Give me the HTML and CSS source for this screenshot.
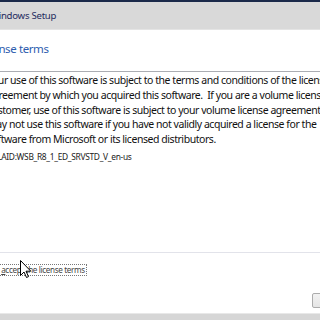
FILE: index.html
```html
<!DOCTYPE html>
<html>
<head>
<meta charset="utf-8">
<link rel="stylesheet" href="styles.css">
</head>
<body>
<div class="screen">
  <div class="topline"></div>
  <header class="titlebar"><span class="title">Windows Setup</span></header>
  <main class="content">
    <h1 class="heading">License terms</h1>
    <div class="eula">
      <p class="eula-text">Your use of this software is subject to the terms and conditions of the license<br>agreement by which you acquired this software.&nbsp; If you are a volume license<br>customer, use of this software is subject to your volume license agreement.&nbsp; You<br>may not use this software if you have not validly acquired a license for the<br>software from Microsoft or its licensed distributors.</p>
      <p class="eula-id">EULAID:WSB_R8_1_ED_SRVSTD_V_en-us</p>
    </div>
    <div class="accept">
      <label class="accept-label"><span class="box"></span><span class="focus">I <u>a</u>ccept the license terms</span></label>
    </div>
    <div class="buttons"><button class="btn">Next</button></div>
  </main>
  <footer class="statusbar"></footer>
  <svg class="cursor" width="12" height="19" viewBox="0 0 12 19"><path d="M0.5 0.5 L0.5 15.5 L4 12 L6.5 17.5 L8.5 16.6 L6 11.2 L10.8 11.2 Z" fill="#fff" stroke="#000" stroke-width="1"/></svg>
</div>
</body>
</html>
```

FILE: styles.css
```css
html, body {
  margin: 0;
  padding: 0;
  background: #ffffff;
}
.screen {
  position: relative;
  width: 320px;
  height: 320px;
  overflow: hidden;
  display: flex;
  flex-direction: column;
  font-family: "Noto Sans", "Open Sans", sans-serif;
  background: #ffffff;
}
.topline {
  height: 2px;
  background: #1b2a4a;
  flex: none;
}
.titlebar {
  height: 27px;
  flex: none;
  background: #d9d9d9;
  border-bottom: 1px solid #e4e4e4;
  display: flex;
  align-items: center;
}
.title {
  margin-left: -10px;
  font-size: 9.6px;
  color: #1f2b5e;
  letter-spacing: -0.25px;
  white-space: nowrap;
}
.content {
  flex: 1;
  display: flex;
  flex-direction: column;
}
.heading {
  margin: 9px 0 12px -21px;
  height: 20px;
  line-height: 20px;
  font-size: 11.5px;
  font-weight: normal;
  color: #2d5cae;
  letter-spacing: -0.4px;
  white-space: nowrap;
}
.eula {
  height: 179px;
  margin-left: -20px;
  width: 420px;
  border: 1px solid #e2e3ea;
  border-top-color: #abadb3;
  padding: 1px 0 0 6px;
  box-sizing: content-box;
}
.eula-text {
  margin: 0;
  font-size: 10.5px;
  line-height: 14.8px;
  color: #111;
  white-space: nowrap;
  letter-spacing: -0.45px;
}
.eula-id {
  margin: 2px 0 0;
  font-size: 8.4px;
  line-height: 15px;
  color: #222;
  white-space: nowrap;
  letter-spacing: -0.3px;
}
.accept {
  margin-top: 10px;
  margin-left: -22px;
  height: 13px;
  display: flex;
  align-items: center;
}
.accept-label {
  display: flex;
  align-items: center;
  gap: 4px;
  font-size: 8.1px;
  color: #444;
  white-space: nowrap;
}
.box {
  width: 11px;
  height: 11px;
  border: 1px solid #8f8f8f;
  background: #f4f4f4;
}
.focus {
  border: 1px dotted #777;
  padding: 0 1px;
  line-height: 10px;
  letter-spacing: -0.35px;
}
.buttons {
  margin-top: 17px;
  padding-left: 312px;
  display: flex;
}
.btn {
  flex: none;
  width: 75px;
  height: 15px;
  padding: 0;
  border: 1px solid #acacac;
  border-radius: 2px;
  background: linear-gradient(#f2f2f2, #e5e5e5);
  font-family: inherit;
  font-size: 9px;
  color: #000;
}
.statusbar {
  flex: none;
  height: 6px;
  background: #d6d6d6;
  border-top: 1px solid #e8e8e8;
}
.cursor {
  position: absolute;
  left: 20px;
  top: 260px;
}
```
